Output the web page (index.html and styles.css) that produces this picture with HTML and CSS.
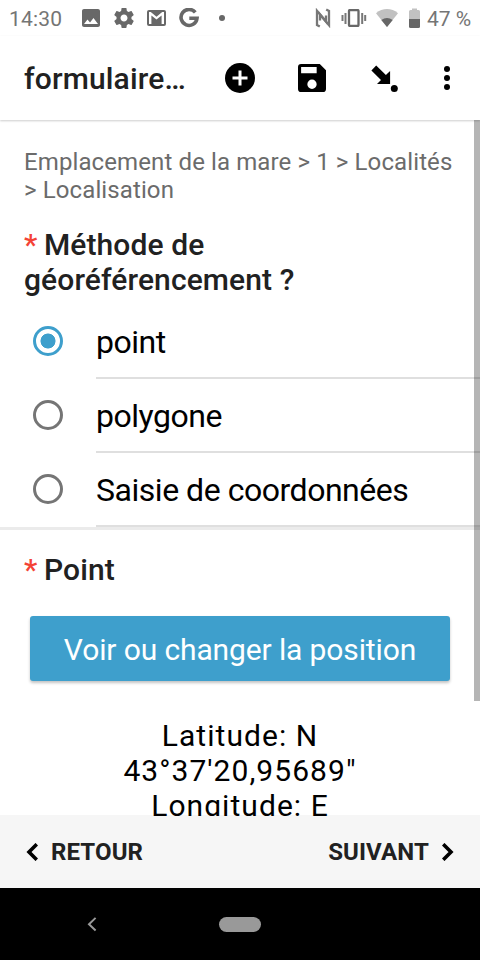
FILE: index.html
```html
<!DOCTYPE html>
<html lang="fr">
<head>
<meta charset="utf-8">
<title>formulaire</title>
<link rel="stylesheet" href="styles.css">
</head>
<body>
<div class="screen">
  <div class="status">
    <span class="clock">14:30</span>
    <svg class="s-photo" viewBox="3 3 18 18" width="18" height="18"><path fill="#686868" d="M21 19V5c0-1.100-.9-2-2-2H5c-1.100 0-2 .9-2 2v14c0 1.100.9 2 2 2h14c1.100 0 2-.9 2-2zM8.500 13.500l2.500 3.010L14.500 12l4.500 6H5l3.500-4.500z"/></svg>
    <svg class="s-gear" viewBox="2 2 20 20" width="20" height="20"><path fill="#686868" d="M19.430 12.980c.04-.32.07-.64.07-.98s-.03-.66-.07-.98l2.110-1.650c.19-.15.24-.42.12-.64l-2-3.460c-.12-.22-.39-.3-.61-.22l-2.490 1c-.52-.4-1.080-.73-1.690-.98l-.38-2.650C14.460 2.180 14.250 2 14 2h-4c-.25 0-.46.18-.49.42l-.38 2.650c-.61.25-1.170.59-1.690.98l-2.490-1c-.23-.09-.49 0-.61.22l-2 3.460c-.13.22-.07.49.12.64l2.110 1.650c-.04.32-.07.65-.07.98s.03.66.07.98l-2.110 1.650c-.19.15-.24.42-.12.64l2 3.460c.12.22.39.3.61.22l2.490-1c.52.4 1.080.73 1.690.98l.38 2.650c.03.24.24.42.49.42h4c.25 0 .46-.18.49-.42l.38-2.650c.61-.25 1.170-.59 1.690-.98l2.490 1c.23.09.49 0 .61-.22l2-3.460c.12-.22.07-.49-.12-.64l-2.110-1.650zM12 15.500c-1.930 0-3.500-1.570-3.500-3.500s1.570-3.500 3.500-3.500 3.500 1.570 3.500 3.500-1.570 3.500-3.500 3.500z"/></svg>
    <svg class="s-mail" viewBox="0 0 19 16" width="19" height="16"><rect width="19" height="16" rx="2" fill="#686868"/><path fill="#fff" d="M2 2h1.800l5.700 4.700L15.200 2H17v12h-2.400V5.500L9.500 9.600 4.400 5.500V14H2z"/></svg>
    <svg class="s-google" viewBox="0 0 20 20" width="20" height="20"><path d="M16.300 4.400A8 8 0 1 0 18 10.300H10.300" fill="none" stroke="#686868" stroke-width="3.600"/></svg>
    <i class="s-dot"></i>
    <span class="spacer"></span>
    <svg class="s-nfc" viewBox="0 0 16 20" width="16" height="20"><g fill="none" stroke="#777" stroke-width="2.300"><path d="M4.800 18.600 2 17V2.800l9 10.700V7.500"/><path d="M11.200 1.400 14 3v14.200L5 6.500v6"/></g></svg>
    <svg class="s-vibrate" viewBox="0 0 26 18" width="26" height="18"><rect x="8" y="1" width="9.500" height="16" rx="1" fill="none" stroke="#686868" stroke-width="2.300"/><path d="M1.500 6v6M4.500 4v11M21.200 4v11M24.200 6v6" stroke="#777" stroke-width="2"/></svg>
    <svg class="s-wifi" viewBox="0 0 22 18" width="22" height="18"><path d="M0 4.200C6.500-1.400 15.500-1.400 22 4.200L11 18z" fill="#c1c1c1"/><path d="M5.300 11q5.700-4 11.400 0L11 18z" fill="#666"/></svg>
    <svg class="s-battery" viewBox="0 0 11 20" width="11" height="20"><path d="M0 3.500Q0 2 1.500 2H3V.5h5V2h1.500Q11 2 11 3.500V11H0z" fill="#c1c1c1"/><path d="M0 11h11v7.500q0 1.500-1.500 1.500h-8Q0 20 0 18.500z" fill="#666"/></svg>
    <span class="percent">47 %</span>
  </div>

  <header class="appbar">
    <h1>formulaire…</h1>
    <svg class="a-add" viewBox="0 0 30 30" width="30" height="30"><circle cx="15" cy="15" r="15"/><path d="M15 7.500v15M7.500 15h15" stroke="#fff" stroke-width="3"/></svg>
    <svg class="a-save" viewBox="0 0 27 27" width="28" height="28"><path fill-rule="evenodd" d="M3 0h18l6 6v18q0 3-3 3H3q-3 0-3-3V3Q0 0 3 0zM3 3v6h15V3zM13.500 15a4.500 4.500 0 1 0 0 9 4.500 4.500 0 0 0 0-9z"/></svg>
    <svg class="a-jump" viewBox="0 0 27 27" width="27" height="27"><path d="M5.200.4 14.900 10.100 19.100 6v13.100H6l4-4L.4 5.400z"/><circle cx="23.300" cy="23.500" r="3.500"/></svg>
    <svg class="a-more" viewBox="0 0 6 24" width="6" height="24"><circle cx="3" cy="3" r="3"/><circle cx="3" cy="12" r="3"/><circle cx="3" cy="21" r="3"/></svg>
  </header>

  <main class="content">
    <p class="path">Emplacement de la mare &gt; 1 &gt; Localités<br>&gt; Localisation</p>
    <h2 class="q-method"><span class="req">*</span> Méthode de<br>géoréférencement ?</h2>
    <ul class="options">
      <li><i class="radio on"></i><span class="label">point</span></li>
      <li><i class="radio"></i><span class="label">polygone</span></li>
      <li><i class="radio"></i><span class="label">Saisie de coordonnées</span></li>
    </ul>
    <div class="divider"></div>
    <h2 class="q-point"><span class="req">*</span> Point</h2>
    <button class="locate">Voir ou changer la position</button>
    <p class="answer">Latitude: N<br>43°37'20,95689"<br>Longitude: E</p>
    <div class="scrollbar"></div>
  </main>

  <footer class="pager">
    <svg viewBox="0 0 12 18" width="12" height="18"><path d="M10.800 1.200 3 9l7.800 7.800" fill="none" stroke="#000" stroke-width="3.600"/></svg>
    <span class="back">RETOUR</span>
    <span class="spacer"></span>
    <span class="next">SUIVANT</span>
    <svg viewBox="0 0 12 18" width="12" height="18"><path d="M1.200 1.200 9 9l-7.800 7.800" fill="none" stroke="#000" stroke-width="3.600"/></svg>
  </footer>

  <div class="sysnav">
    <svg viewBox="0 0 10 16" width="10" height="16"><path d="M8.600 1.900 2 8.200l6.600 6.300" fill="none" stroke="#999" stroke-width="2"/></svg>
    <i class="pill"></i>
  </div>
</div>
</body>
</html>
```

FILE: styles.css
```css
* { box-sizing: border-box; margin: 0; padding: 0; }
body { width: 480px; height: 960px; overflow: hidden; background: #fff; font-family: Roboto, sans-serif; }
svg, i { display: block; flex: none; }
.screen { display: flex; flex-direction: column; width: 480px; height: 960px; }
.spacer { flex: 1; }

.status { height: 36px; flex: none; display: flex; align-items: center; padding: 0 9px; color: #757575; font-size: 21px; line-height: 36px; white-space: nowrap; }
.clock { width: 73px; padding-top: 2px; letter-spacing: .2px; }
.s-photo { margin-right: 14px; }
.s-gear { margin-right: 13px; }
.s-mail { margin-right: 13px; }
.s-google { margin-right: 20px; }
.s-dot { width: 6px; height: 6px; border-radius: 50%; background: #686868; }
.s-nfc { margin-right: 10px; }
.s-vibrate { margin-right: 9px; }
.s-wifi { margin-right: 11px; }
.s-battery { margin-right: 7px; }
.percent { width: 44px; padding-top: 2px; }

.appbar { height: 84px; flex: none; display: flex; align-items: center; padding-left: 24px; background: #fff; box-shadow: 0 1px 2px rgba(0,0,0,.2); z-index: 1; }
.appbar h1 { width: 201px; padding-top: 1px; font-size: 30px; font-weight: 500; line-height: 36px; letter-spacing: .15px; color: #212121; }
.a-add { margin-right: 43px; }
.a-save { margin-right: 45px; }
.a-jump { margin-right: 46px; }

.content { position: relative; z-index: 1; height: 696px; flex: none; overflow: hidden; padding-top: 28px; }
.path { padding-left: 24px; font-size: 24px; line-height: 28px; letter-spacing: .11px; color: #6b6b6b; white-space: nowrap; }
h2 { padding-left: 24px; font-size: 30px; line-height: 35px; font-weight: 500; letter-spacing: .1px; color: #212121; }
.q-method { margin-top: 23px; }
.req { color: #f44336; margin-right: -1px; }
.options { list-style: none; margin-top: 8px; }
.options li { height: 74px; display: flex; padding-left: 33px; align-items: center; }
.radio { width: 30px; height: 30px; border: 3px solid #757575; border-radius: 50%; margin: -2px 33px 0 0; }
.radio.on { border-color: #3e9fcc; background: radial-gradient(circle, #3e9fcc 7.200px, transparent 7.800px); }
.label { flex: 1; height: 74px; border-bottom: 2px solid #dfdfdf; font-size: 32px; line-height: 74px; letter-spacing: -.47px; color: #000; }
.divider { height: 3px; background: #ebebeb; }
.q-point { margin-top: 22px; }
.locate { display: block; width: 420px; height: 65px; margin: 29px 0 0 30px; padding-top: 2px; border: 0; border-radius: 3px; background: #3e9fcc; color: #fff; font: 400 30px/63px Roboto, sans-serif; letter-spacing: -.12px; box-shadow: 0 2px 3px rgba(0,0,0,.24); }
.answer { margin-top: 37px; text-align: center; font-size: 30px; line-height: 35px; letter-spacing: 1.050px; color: #000; }
.scrollbar { position: absolute; top: 0; right: 0; width: 6px; height: 581px; background: rgba(0,0,0,.29); }

.pager { height: 73px; flex: none; margin-top: -1px; display: flex; align-items: center; padding: 0 26px; background: #f6f6f6; color: #212121; font-size: 24px; font-weight: 700; letter-spacing: .12px; }
.back { margin-left: 13px; }
.next { margin-right: 13px; }

.sysnav { height: 72px; flex: none; display: flex; align-items: center; padding-left: 87px; background: #000; }
.pill { width: 42px; height: 15px; border-radius: 8px; margin-left: 122px; background: #999; }
```
